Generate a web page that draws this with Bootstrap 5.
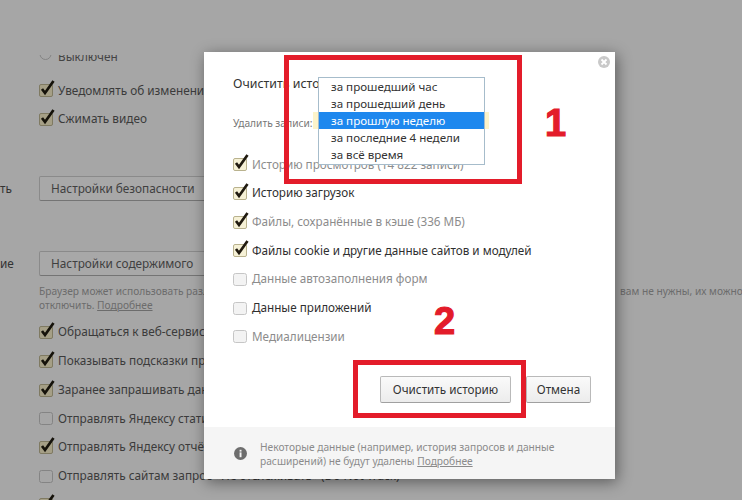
<!DOCTYPE html>
<html lang="ru">
<head>
<meta charset="utf-8">
<title>Очистить историю</title>
<link href="https://cdn.jsdelivr.net/npm/bootstrap@5.3.0/dist/css/bootstrap.min.css" rel="stylesheet">
<style>
html,body{width:742px;height:500px;overflow:hidden}
body{background:#a6a6a6;font-family:"Noto Sans","Open Sans",sans-serif;font-size:11.8px;color:#3b3b3b;position:relative}
.bg-page{height:500px;overflow:hidden;padding-top:55px}
.bg-clip{height:6px;overflow:hidden;display:flex;align-items:flex-end;padding-left:39px;gap:6px;color:#444}
.bg-clip svg{flex:none}
.bg-clip span{display:block;height:16px;line-height:16px;margin-bottom:-3px}
.bg-row{height:28.7px;display:flex;align-items:center;padding-left:39px;gap:3px;white-space:nowrap}
.bg-first{margin-top:15px}
.bg-side{height:25px;display:flex;align-items:center;white-space:nowrap}
.bg-side-label{width:39px;color:#333;flex:none}
.bg-btn{width:200px;height:25px;background:#a8a8a8;border:1px solid #8a8a8a;border-bottom-color:#747474;border-radius:2px;padding-left:11px;line-height:22px;color:#404040;flex:none}
.bg-gap-a{margin-top:42.6px}
.bg-gap-b{margin-top:50px}
.bg-note{padding-left:39px;font-size:10.2px;line-height:14px;color:#6c6c6c;white-space:nowrap;margin:8px 0 6px;position:relative}
.bg-note a,.dlg-foot a{color:inherit}
.bg-far{position:absolute;left:620px;top:0;font-size:10.2px}
.box-chk{width:16px;height:18px;flex:none;margin-top:-4px}
.dlg{position:absolute;left:204px;top:52px;width:411px;height:427px;background:#fff;box-shadow:2px 3px 14px rgba(0,0,0,.45);display:flex;flex-direction:column;z-index:2}
.dlg-main{flex:1;padding:23px 29px 0;position:relative}
.dlg-title{font-size:12.4px;line-height:18px;color:#333;white-space:nowrap}
.dlg-label{font-size:10.2px;line-height:16px;color:#777;margin-top:22px;margin-bottom:19px}
.dlg-row{height:28.7px;display:flex;align-items:center;gap:3px;white-space:nowrap;color:#2f2f2f;font-size:11.7px}
.dlg-row.is-dim{color:#8c8c8c}
.dlg-actions{gap:15px;position:absolute;right:24px;top:324px}
.act-btn{height:27px;padding:0;font-size:11.7px;line-height:25px;color:#333;white-space:nowrap;background:linear-gradient(#fafafa,#ececec);border:1px solid #b9b9b9;border-bottom-color:#a0a0a0;border-radius:2px}
.act-wide{width:131px}.act-small{width:65px}
.dlg-foot{height:52px;background:#f5f5f5;display:flex;align-items:center;gap:13px;padding:0 30px;font-size:10.2px;line-height:14px;color:#8b8b8b;white-space:nowrap}
.foot-copy{margin-top:2px}
.dlg-close{position:absolute;right:5px;top:4px;width:12px;height:12px;display:block}
.pick-list{position:absolute;left:114px;top:25px;width:167px;height:88px;background:#fff;border:1px solid #a6bccb;padding:0;z-index:3;font-size:11.6px;line-height:17px;color:#333}
.pick-item{padding-left:12px;height:17px;white-space:nowrap}
.pick-item.is-on{background:#1e88ee;color:#fff}
.glow{position:absolute;left:109px;top:60px;width:176px;height:17px;background:#fdf3c9}
.mark-box{position:absolute;border:5px solid #e31c2a;z-index:4;pointer-events:none}
.mark-a{left:284px;top:55px;width:238px;height:129px}
.mark-b{left:353px;top:360px;width:173px;height:58px}
.mark-num{position:absolute;z-index:4;color:#e31c2a;font-family:"Liberation Sans",sans-serif;font-weight:700;font-size:38px;line-height:38px;-webkit-text-stroke:1.2px #e31c2a}
.num-a{left:545px;top:104px}
.num-b{left:434px;top:302px}
</style>
</head>
<body>
<svg width="0" height="0" class="d-block position-absolute">
<defs>
<symbol id="on" viewBox="0 0 16 18"><rect x=".5" y="5.5" width="13" height="12" rx="1.5" fill="#f6f1d6" stroke="#b9b28e"/><path d="M3 10 6 14 14.5 2" fill="none" stroke="#201a10" stroke-width="2.7"/></symbol>
<symbol id="onbg" viewBox="0 0 16 18"><rect x=".5" y="5.5" width="13" height="12" rx="1.5" fill="#a59f86" stroke="#7f7a62"/><path d="M3 10 6 14 14.5 2" fill="none" stroke="#15120a" stroke-width="2.7"/></symbol>
<symbol id="off" viewBox="0 0 16 18"><rect x=".5" y="5.5" width="13" height="12" rx="2" fill="#f3f3f3" stroke="#c6c6c6"/></symbol>
<symbol id="offbg" viewBox="0 0 16 18"><rect x=".5" y="5.5" width="13" height="12" rx="2" fill="#a6a6a6" stroke="#848484"/></symbol>
</defs>
</svg>

<main class="bg-page">
  <div class="bg-clip"><svg width="13" height="6" viewBox="0 0 13 6"><circle cx="6.5" cy="-1" r="5.5" fill="none" stroke="#848484"/></svg><span>Выключен</span></div>
  <div class="bg-row bg-first"><svg class="box-chk"><use href="#onbg"/></svg><span>Уведомлять об изменениях</span></div>
  <div class="bg-row"><svg class="box-chk"><use href="#onbg"/></svg><span>Сжимать видео</span></div>
  <div class="bg-side bg-gap-a"><span class="bg-side-label">ть</span><div class="bg-btn">Настройки безопасности</div></div>
  <div class="bg-side bg-gap-b"><span class="bg-side-label">ие</span><div class="bg-btn">Настройки содержимого</div></div>
  <div class="bg-note">Браузер может использовать различные веб-сервисы<span class="bg-far">вам не нужны, их можно</span><br>отключить. <a href="#">Подробнее</a></div>
  <div class="bg-row"><svg class="box-chk"><use href="#onbg"/></svg><span>Обращаться к веб-сервисам</span></div>
  <div class="bg-row"><svg class="box-chk"><use href="#onbg"/></svg><span>Показывать подсказки при вводе</span></div>
  <div class="bg-row"><svg class="box-chk"><use href="#onbg"/></svg><span>Заранее запрашивать данные</span></div>
  <div class="bg-row"><svg class="box-chk"><use href="#offbg"/></svg><span>Отправлять Яндексу статистику</span></div>
  <div class="bg-row"><svg class="box-chk"><use href="#onbg"/></svg><span>Отправлять Яндексу отчёты</span></div>
  <div class="bg-row"><svg class="box-chk"><use href="#offbg"/></svg><span>Отправлять сайтам запрос «Не отслеживать» (Do Not Track)</span></div>
  <div class="bg-row"><svg class="box-chk"><use href="#onbg"/></svg></div>
</main>

<section class="dlg">
  <div class="dlg-main">
    <svg class="dlg-close" viewBox="0 0 12 12"><circle cx="6" cy="6" r="6" fill="#c9c9c9"/><path d="M3.5 3.5l5 5M8.5 3.5l-5 5" stroke="#fff" stroke-width="1.8"/></svg>
    <div class="dlg-title">Очистить историю</div>
    <div class="dlg-label">Удалить записи:</div>
    <div class="glow"></div>
    <div class="pick-list">
      <div class="pick-item">за прошедший час</div>
      <div class="pick-item">за прошедший день</div>
      <div class="pick-item is-on">за прошлую неделю</div>
      <div class="pick-item">за последние 4 недели</div>
      <div class="pick-item">за всё время</div>
    </div>
    <div class="dlg-row is-dim"><svg class="box-chk"><use href="#on"/></svg><span>Историю просмотров (14 822 записи)</span></div>
    <div class="dlg-row"><svg class="box-chk"><use href="#on"/></svg><span>Историю загрузок</span></div>
    <div class="dlg-row is-dim"><svg class="box-chk"><use href="#on"/></svg><span>Файлы, сохранённые в кэше (336 МБ)</span></div>
    <div class="dlg-row"><svg class="box-chk"><use href="#on"/></svg><span>Файлы cookie и другие данные сайтов и модулей</span></div>
    <div class="dlg-row is-dim"><svg class="box-chk"><use href="#off"/></svg><span>Данные автозаполнения форм</span></div>
    <div class="dlg-row"><svg class="box-chk"><use href="#off"/></svg><span>Данные приложений</span></div>
    <div class="dlg-row is-dim"><svg class="box-chk"><use href="#off"/></svg><span>Медиалицензии</span></div>
    <div class="dlg-actions d-flex">
      <button type="button" class="btn act-btn act-wide">Очистить историю</button>
      <button type="button" class="btn act-btn act-small">Отмена</button>
    </div>
  </div>
  <div class="dlg-foot">
    <svg width="13" height="13" viewBox="0 0 13 13" class="flex-shrink-0"><circle cx="6.5" cy="6.5" r="6.5" fill="#6e6e6e"/><rect x="5.6" y="5.4" width="1.9" height="4.8" fill="#f5f5f5"/><rect x="5.6" y="2.8" width="1.9" height="1.8" fill="#f5f5f5"/></svg>
    <div class="foot-copy">Некоторые данные (например, история запросов и данные<br>расширений) не будут удалены <a href="#">Подробнее</a></div>
  </div>
</section>

<div class="mark-box mark-a"></div>
<div class="mark-box mark-b"></div>
<div class="mark-num num-a">1</div>
<div class="mark-num num-b">2</div>
<script src="https://cdn.jsdelivr.net/npm/bootstrap@5.3.0/dist/js/bootstrap.bundle.min.js"></script>
</body>
</html>
